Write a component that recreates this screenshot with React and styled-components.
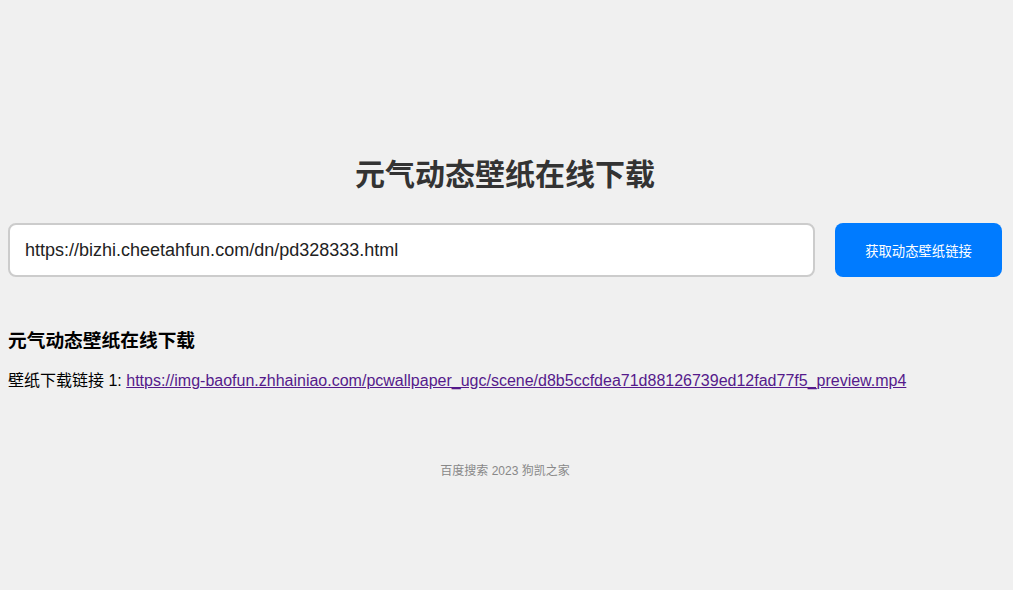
import React, { useState } from "react";
import styled, { createGlobalStyle } from "styled-components";

const GlobalStyle = createGlobalStyle`
  html, body {
    margin: 0;
    background: #f0f0f0;
  }
  body {
    padding: 0 11px 0 8px;
    font-family: "Liberation Sans", Arial, "Noto Sans CJK SC", sans-serif;
    color: #000;
  }
`;

const Wrap = styled.div`
  padding-top: 155px;
`;

const Title = styled.h1`
  margin: 0;
  text-align: center;
  font-size: 30px;
  line-height: 40px;
  font-weight: bold;
  color: #333;
`;

const SearchRow = styled.form`
  display: flex;
  align-items: stretch;
  gap: 20px;
  margin-top: 28px;
`;

const UrlInput = styled.input`
  flex: 1;
  box-sizing: border-box;
  height: 54px;
  padding: 0 15px;
  border: 2px solid #ccc;
  border-radius: 8px;
  background: #fff;
  font-family: "Liberation Sans", Arial, sans-serif;
  font-size: 18px;
  color: #222;
  outline: none;
`;

const FetchButton = styled.button`
  width: 167px;
  height: 54px;
  border: none;
  border-radius: 8px;
  background: #007bff;
  color: #fff;
  font-family: "Liberation Sans", Arial, "Noto Sans CJK SC", sans-serif;
  font-size: 13.33px;
  cursor: pointer;
`;

const Result = styled.section`
  margin-top: 52px;
`;

const ResultTitle = styled.h3`
  margin: 0;
  font-size: 18.72px;
  line-height: 24px;
  font-weight: bold;
`;

const LinkLine = styled.p`
  margin: 18px 0 0;
  font-size: 16px;
  line-height: 20px;
  a {
    color: #551a8b;
    text-decoration: underline;
  }
`;

const Footer = styled.footer`
  margin-top: 72px;
  text-align: center;
  font-size: 12px;
  line-height: 16px;
  color: #888;
`;

const links = [
  "https://img-baofun.zhhainiao.com/pcwallpaper_ugc/scene/d8b5ccfdea71d88126739ed12fad77f5_preview.mp4",
];

const App = () => {
  const [url, setUrl] = useState("https://bizhi.cheetahfun.com/dn/pd328333.html");

  return (
    <Wrap>
      <GlobalStyle />
      <Title>元气动态壁纸在线下载</Title>
      <SearchRow onSubmit={(e) => e.preventDefault()}>
        <UrlInput value={url} onChange={(e) => setUrl(e.target.value)} />
        <FetchButton type="submit">获取动态壁纸链接</FetchButton>
      </SearchRow>
      <Result>
        <ResultTitle>元气动态壁纸在线下载</ResultTitle>
        {links.map((v, i) => (
          <LinkLine key={i}>
            壁纸下载链接 {i + 1}: <a href={v}>{v}</a>
          </LinkLine>
        ))}
      </Result>
      <Footer>百度搜索 2023 狗凯之家</Footer>
    </Wrap>
  );
};

export default App;
